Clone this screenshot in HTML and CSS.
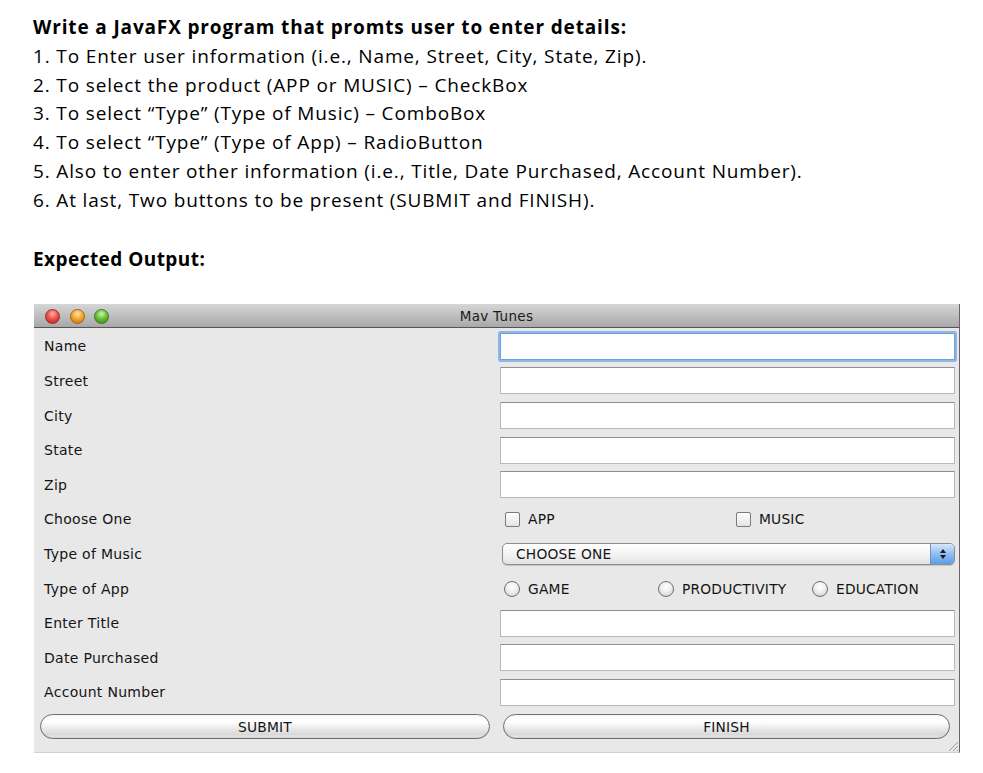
FILE: index.html
```html
<!DOCTYPE html>
<html>
<head>
<meta charset="utf-8">
<link rel="stylesheet" href="styles.css">
</head>
<body>
<div class="doc">
  <p class="line bold heading">Write a JavaFX program that promts user to enter details:</p>
  <p class="line">1. To Enter user information (i.e., Name, Street, City, State, Zip).</p>
  <p class="line">2. To select the product (APP or MUSIC) – CheckBox</p>
  <p class="line">3. To select “Type” (Type of Music) – ComboBox</p>
  <p class="line">4. To select “Type” (Type of App) – RadioButton</p>
  <p class="line">5. Also to enter other information (i.e., Title, Date Purchased, Account Number).</p>
  <p class="line">6. At last, Two buttons to be present (SUBMIT and FINISH).</p>
  <p class="line bold expected">Expected Output:</p>

  <div class="window">
    <div class="titlebar">
      <div class="lights">
        <span class="light red"></span>
        <span class="light orange"></span>
        <span class="light green"></span>
      </div>
      <div class="title">Mav Tunes</div>
    </div>
    <div class="form">
      <div class="label">Name</div><div class="cell"><div class="field focus"></div></div>
      <div class="label">Street</div><div class="cell"><div class="field"></div></div>
      <div class="label">City</div><div class="cell"><div class="field"></div></div>
      <div class="label">State</div><div class="cell"><div class="field"></div></div>
      <div class="label">Zip</div><div class="cell"><div class="field"></div></div>
      <div class="label">Choose One</div>
      <div class="cell checks">
        <div class="opt"><span class="checkbox"></span><span class="ctl-text">APP</span></div>
        <div class="opt"><span class="checkbox"></span><span class="ctl-text">MUSIC</span></div>
      </div>
      <div class="label">Type of Music</div>
      <div class="cell">
        <div class="combo">
          <span class="ctl-text combo-text">CHOOSE ONE</span>
          <span class="stepper">
            <svg width="8" height="12" viewBox="0 0 8 12"><path d="M4 1 L7 5 L1 5 Z M4 11 L7 7 L1 7 Z" fill="#1b1b1b"/></svg>
          </span>
        </div>
      </div>
      <div class="label">Type of App</div>
      <div class="cell radios">
        <div class="opt"><span class="radio"></span><span class="ctl-text">GAME</span></div>
        <div class="opt"><span class="radio"></span><span class="ctl-text">PRODUCTIVITY</span></div>
        <div class="opt"><span class="radio"></span><span class="ctl-text">EDUCATION</span></div>
      </div>
      <div class="label">Enter Title</div><div class="cell"><div class="field"></div></div>
      <div class="label">Date Purchased</div><div class="cell"><div class="field"></div></div>
      <div class="label">Account Number</div><div class="cell"><div class="field"></div></div>
    </div>
    <div class="buttons">
      <div class="btn submit"><span class="ctl-text">SUBMIT</span></div>
      <div class="btn finish"><span class="ctl-text">FINISH</span></div>
    </div>
    <svg class="grip" width="12" height="12" viewBox="0 0 12 12">
      <path d="M11 2 L2 11 M11 6 L6 11 M11 10 L10 11" stroke="#9a9a9a" stroke-width="1"/>
    </svg>
  </div>
</div>
</body>
</html>
```

FILE: styles.css
```css
* { box-sizing: border-box; }
html, body { margin: 0; padding: 0; background: #ffffff; }

.doc {
  padding: 13px 0 0 33px;
  font-family: "Open Sans", Lato, sans-serif;
  font-size: 19px;
  letter-spacing: 0.85px;
  color: #000;
}
.line {
  margin: 0;
  line-height: 28.8px;
  white-space: nowrap;
}
.bold { font-weight: bold; }
.heading { letter-spacing: 0.85px; }
.expected { margin-top: 30px; letter-spacing: 0.45px; }

.window {
  position: relative;
  margin-top: 31px;
  margin-left: 1px;
  width: 926px;
  background: #e8e8e8;
  border-right: 1px solid #6d5f6d;
  border-bottom: 1px solid #d0d0d0;
  font-family: "DejaVu Sans", sans-serif;
  font-size: 14px;
  letter-spacing: 0.3px;
  color: #141414;
}

.titlebar {
  position: relative;
  height: 24px;
  background: linear-gradient(#d6d6d6, #a8a8a8);
  border-bottom: 1px solid #555;
  display: flex;
  align-items: center;
}
.lights {
  display: flex;
  gap: 9.5px;
  padding-left: 11px;
  padding-top: 1px;
}
.light {
  width: 15px;
  height: 15px;
  border-radius: 50%;
  display: block;
}
.light.red {
  background: radial-gradient(circle at 50% 30%, #ffb3b0 0, #f0504a 45%, #b8221c 100%);
  border: 1px solid #9a2c28;
}
.light.orange {
  background: radial-gradient(circle at 50% 30%, #ffe6a8 0, #f6a833 45%, #c06a0a 100%);
  border: 1px solid #a0661c;
}
.light.green {
  background: radial-gradient(circle at 50% 30%, #d1f5a8 0, #6cc13a 45%, #317e14 100%);
  border: 1px solid #3d7a22;
}
.title {
  position: absolute;
  left: 0;
  right: 0;
  top: 4px;
  text-align: center;
  color: #1a1a1a;
  font-size: 13.5px;
  letter-spacing: 0.3px;
}

.form {
  display: grid;
  grid-template-columns: 466px 455px;
  grid-auto-rows: 34.6px;
  padding-top: 0.7px;
}
.label {
  display: flex;
  align-items: center;
  padding-left: 10px;
}
.cell {
  display: flex;
  align-items: center;
}
.field {
  width: 455px;
  height: 27px;
  background: #fff;
  border: 1px solid #b9b9b9;
  border-top-color: #8f8f8f;
}
.field.focus {
  border: 1px solid #6f9fd6;
  box-shadow: 0 0 0 2px #8fb6e6;
  border-radius: 1px;
}

.opt {
  display: flex;
  align-items: center;
  gap: 8px;
}
.checks {
  display: grid;
  grid-template-columns: 231px auto;
  padding-left: 5px;
}
.checkbox {
  width: 15px;
  height: 15px;
  border: 1px solid #7a7a7a;
  border-radius: 2px;
  background: linear-gradient(#ffffff, #e4e4e4);
  display: block;
}
.radios {
  display: grid;
  grid-template-columns: 154px 154px auto;
  padding-left: 4px;
}
.radio {
  width: 16px;
  height: 16px;
  border: 1px solid #707070;
  border-radius: 50%;
  background: radial-gradient(circle at 50% 35%, #ffffff 0, #eeeeee 45%, #c8c8c8 100%);
  display: block;
}
.ctl-text { font-size: 13.8px; letter-spacing: 0.2px; }

.combo {
  margin-left: 2px;
  width: 453px;
  height: 22px;
  border: 1px solid #8e8e8e;
  border-radius: 5px;
  background: linear-gradient(#ffffff, #f4f4f4 50%, #e2e2e2);
  display: flex;
  align-items: center;
  justify-content: space-between;
  overflow: hidden;
  box-shadow: 0 1px 1px rgba(0,0,0,0.15);
}
.combo-text { padding-left: 13px; }
.stepper {
  width: 24px;
  height: 100%;
  background: linear-gradient(#d6e8fb, #8fbdf2 50%, #5a9de8);
  border-left: 1px solid #6d93c2;
  display: flex;
  align-items: center;
  justify-content: center;
}

.buttons {
  display: flex;
  gap: 13px;
  height: 34.6px;
  align-items: center;
  padding: 0 9px 0 6px;
  margin-bottom: 8px;
}
.btn {
  height: 25px;
  border: 1px solid #6f6f6f;
  border-radius: 13px;
  background: linear-gradient(#f7f7f7, #ffffff 30%, #e9e9e9 60%, #d9d9d9 85%, #ededed);
  display: flex;
  align-items: center;
  justify-content: center;
  box-shadow: inset 0 -1px 1px rgba(0,0,0,0.1);
}
.btn.submit { width: 450px; }
.btn.finish { width: 447px; }

.grip {
  position: absolute;
  right: 0;
  bottom: 0;
}
```
